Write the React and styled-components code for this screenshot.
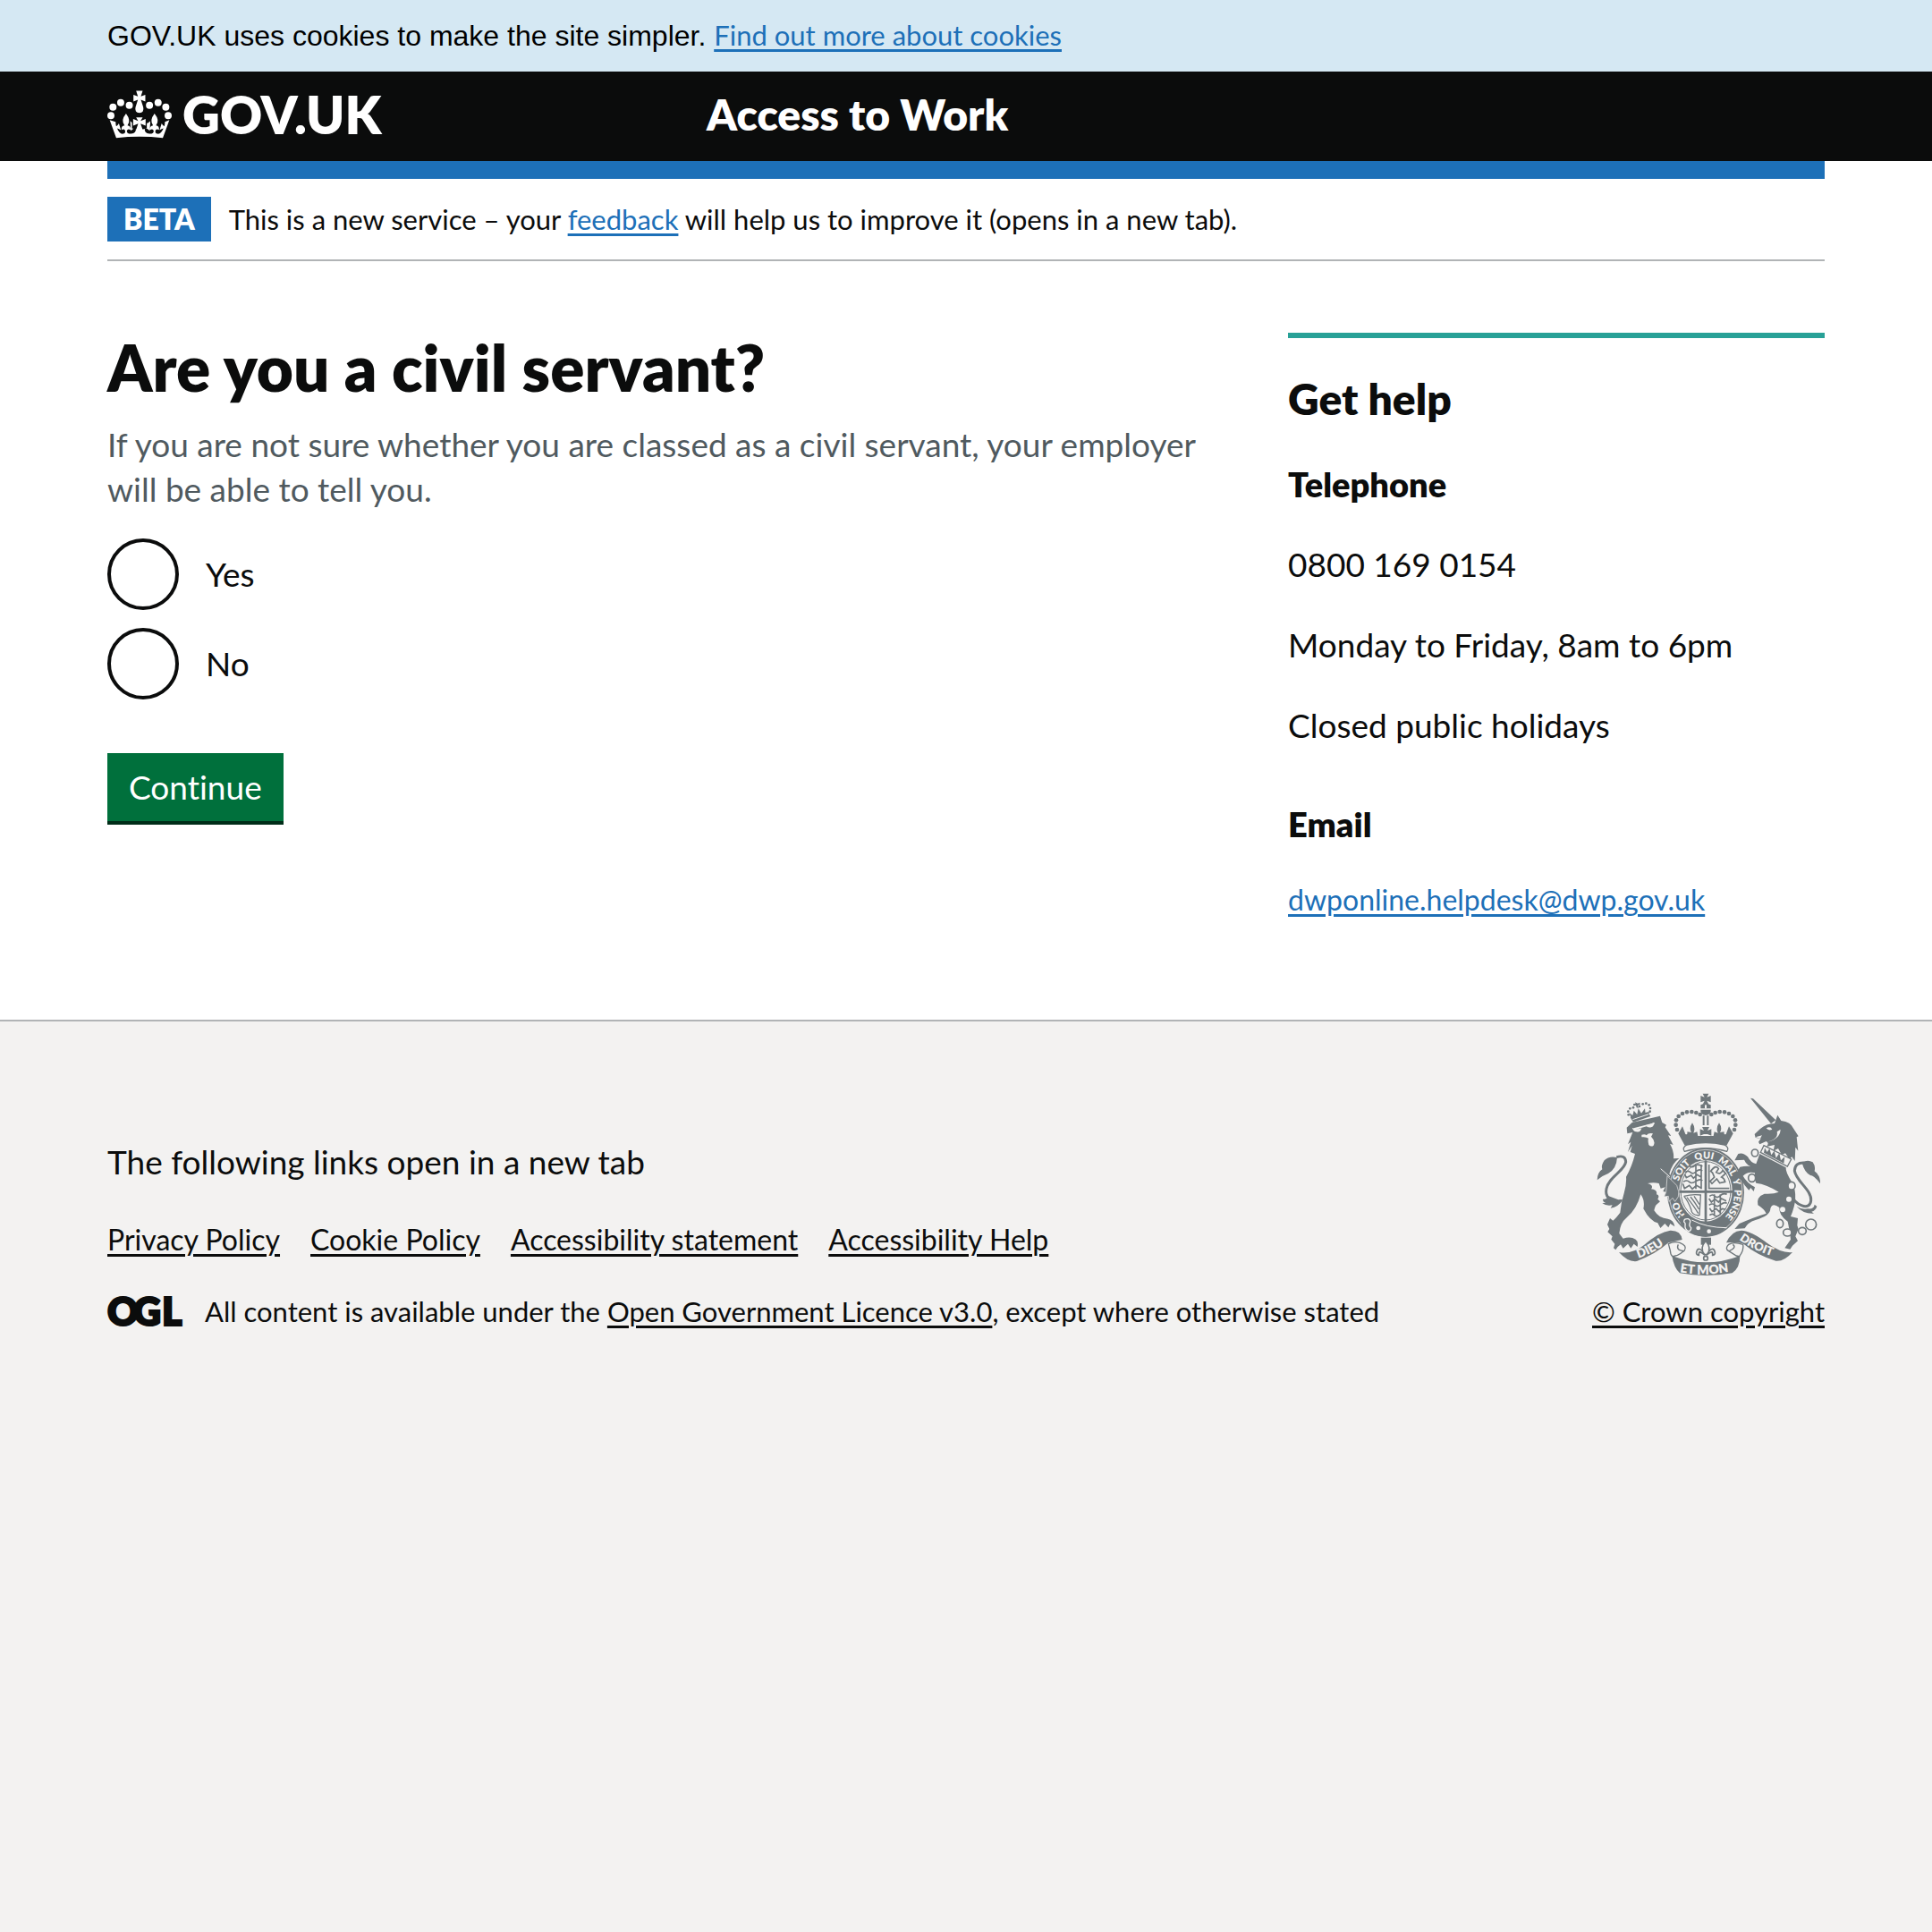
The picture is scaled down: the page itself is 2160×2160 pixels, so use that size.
import React from "react";
import styled, { createGlobalStyle } from "styled-components";

const colours = {
  ink: "#0b0c0c",
  blue: "#1d70b8",
  pale: "#d5e8f3",
  rule: "#b1b4b6",
  hint: "#505a5f",
  teal: "#28a197",
  green: "#00703c",
  greenShadow: "#002d18",
  canvas: "#f3f2f1",
  crest: "#6f777b",
};

const sans = `Lato, "Liberation Sans", Arial, sans-serif`;
const heavy = 800;

const GlobalStyle = createGlobalStyle`
  *, *::before, *::after { box-sizing: border-box; }
  body {
    margin: 0;
    background: ${colours.canvas};
    color: ${colours.ink};
    font-family: ${sans};
    font-size: 37px;
    line-height: 50px;
  }
`;

const Container = styled.div`
  width: calc(100% - 60px);
  max-width: 1920px;
  margin: 0 auto;
`;

const Link = styled.a`
  color: ${(p) => (p.$dark ? colours.ink : colours.blue)};
  font-size: ${(p) => (p.$large ? "32px" : "31px")};
  line-height: 40px;
  text-decoration-thickness: 3px;
  text-underline-offset: 4px;
`;

const CookieBar = styled.div`
  background: ${colours.pale};
  padding: 20px 0;
`;

const CookieText = styled.p`
  margin: 0;
  color: #000;
  font-family: "Liberation Sans", Arial, sans-serif;
  font-size: 32px;
  line-height: 40px;

  a {
    font-family: ${sans};
    line-height: 32px;
  }
`;

const Header = styled.header`
  background: ${colours.ink};
  color: #fff;
`;

const HeaderRow = styled(Container)`
  display: grid;
  grid-template-columns: 1fr 2fr;
  align-items: center;
  height: 100px;
  padding-bottom: 4px;
`;

const HomeLink = styled.a`
  display: flex;
  align-items: center;
  gap: 12px;
  color: inherit;
  font-size: 58px;
  font-weight: ${heavy};
  line-height: 60px;
  text-decoration: none;
`;

const ServiceLink = styled.a`
  padding-left: 30px;
  color: inherit;
  font-size: 48px;
  font-weight: ${heavy};
  line-height: 60px;
  text-decoration: none;
`;

const BlueRule = styled(Container)`
  height: 20px;
  background: ${colours.blue};
`;

const Page = styled.div`
  background: #fff;
`;

const PhaseBanner = styled(Container)`
  display: flex;
  align-items: center;
  gap: 20px;
  padding: 20px 0;
  border-bottom: 2px solid ${colours.rule};
`;

const Tag = styled.strong`
  padding: 0 18px;
  background: ${colours.blue};
  color: #fff;
  font-size: 32px;
  font-weight: ${heavy};
  line-height: 50px;
`;

const PhaseText = styled.p`
  margin: 0;
  font-size: 31px;
  line-height: 40px;
`;

const Main = styled(Container)`
  display: grid;
  grid-template-columns: minmax(0, 1fr) calc((100% + 60px) / 3 - 60px);
  column-gap: 60px;
  align-items: start;
  padding: 80px 0 114px;

  @media (max-width: 1280px) { grid-template-columns: 1fr; }
`;

const Form = styled.form`
  display: flex;
  flex-direction: column;
  align-items: flex-start;
  gap: 60px;
`;

const Fieldset = styled.fieldset`
  min-width: 0;
  margin: 0;
  padding: 0;
  border: 0;
`;

const Legend = styled.legend`
  padding: 0;
`;

const Title = styled.h1`
  margin: 0 0 22px;
  font-size: 71px;
  font-weight: ${heavy};
  line-height: 78px;
`;

const Hint = styled.p`
  margin: 0 0 30px;
  color: ${colours.hint};
`;

const Radios = styled.div`
  display: grid;
  gap: 20px;
`;

const RadioRow = styled.div`
  display: flex;
  align-items: center;
`;

const RadioInput = styled.input`
  appearance: none;
  width: 80px;
  height: 80px;
  margin: 0;
  border: 4px solid ${colours.ink};
  border-radius: 50%;
  background: transparent;
  cursor: pointer;

  &:checked { background: radial-gradient(circle, ${colours.ink} 0 20px, transparent 21px); }
  &:focus { outline: 6px solid #fd0; }
`;

const RadioLabel = styled.label`
  padding: 0 30px;
  cursor: pointer;
`;

const Submit = styled.button`
  padding: 13px 24px;
  border: 0;
  background: ${colours.green};
  box-shadow: 0 4px 0 ${colours.greenShadow};
  color: #fff;
  font: inherit;
  font-variant-ligatures: no-common-ligatures;
  cursor: pointer;
`;

const Help = styled.aside`
  display: flex;
  flex-direction: column;
  align-items: stretch;
  gap: 40px;
  padding-top: 38px;
  border-top: 6px solid ${colours.teal};
`;

const HelpTitle = styled.h2`
  margin: 0;
  font-size: 48px;
  font-weight: ${heavy};
  line-height: 60px;
`;

const HelpSubtitle = styled.h3`
  margin: 0;
  padding-top: ${(p) => (p.$spaced ? "20px" : "0")};
  font-size: 38px;
  font-weight: ${heavy};
  line-height: 50px;
`;

const HelpText = styled.p`
  margin: 0;
`;

const Footer = styled.footer`
  border-top: 2px solid ${colours.rule};
  padding: 80px 0;
`;

const FooterRow = styled(Container)`
  display: flex;
  align-items: flex-end;
  justify-content: space-between;
  gap: 60px;
`;

const FooterMeta = styled.div`
  display: grid;
  gap: 40px;
`;

const FooterTitle = styled.h2`
  margin: 0;
  font-size: 37px;
  font-weight: 400;
  line-height: 50px;
`;

const FooterLinks = styled.ul`
  display: flex;
  flex-wrap: wrap;
  column-gap: 34px;
  margin: 0;
  padding: 0;
  list-style: none;
  line-height: 40px;
`;

const Licence = styled.div`
  display: flex;
  align-items: center;
  gap: 27px;
  font-size: 31px;
  line-height: 40px;
`;

const Copyright = styled.div`
  display: flex;
  flex-direction: column;
  align-items: center;
  gap: 20px;
`;

const Drawing = styled.svg`
  display: block;
  flex: none;
  overflow: visible;
`;

const Crown = () => (
  <Drawing width="72" height="54" viewBox="30 32 217 162" fill="#fff" aria-hidden="true">
    {[[42, 117], [49, 88], [75, 73], [104, 82], [172, 82], [201, 73], [227, 88], [235, 117]].map(([x, y]) => (
      <circle key={x} cx={x} cy={y} r="12" />
    ))}
    <path d="M127 33h22l-6 19 15-5v22l-15-6 8 25q4 18-13 20-17-2-13-20l8-25-15 6V47l15 5z" />
    <path d="M38 132l22 60q78-9 157 0l22-60-15 6q0 10-2 15-6-4-9-10l-7 23q7-5 13-6-8 20-20 18-9-2-7-11 3-8 12-2 2-13-10-15 14-17-5-40-18 23-5 40-12 2-10 15 9-6 12 2 2 11-14 11-18-1-16-19 9 0 17 9l2-33q-7 9-21 9 1-8 9-20h-44q8 12 9 20-14 0-21-9l2 33q8-9 17-9 2 18-16 19-16 0-14-11 3-8 12-2 2-13-10-15 13-17-5-40-19 23-5 40-12 2-10 15 9-6 12 2 2 9-7 11-12 2-20-18 6 1 13 6l-7-23q-3 6-9 10-2-5-2-15z" />
    <path fill={colours.ink} d="M113 118h50v42q-25 8-50 0z" />
    <path d="M127 123h22l-7 12 17-7v23l-17-7 7 20h-22l7-20-17 7v-23l17 7z" />
  </Drawing>
);

const LicenceLogo = () => (
  <Drawing width="82" height="40" viewBox="0 0 82 40" role="img" aria-label="Open Government Licence">
    <text x="0 29 61" y="36" fill={colours.ink} stroke={colours.ink} strokeWidth="2" fontFamily="Lato, sans-serif" fontWeight="800" fontSize="43">OGL</text>
  </Drawing>
);

const leftBeads = [
  [341, 187], [337, 171], [338, 155], [346, 142], [359, 133], [374, 128], [390, 127], [405, 130], [418, 136],
];

const lionBeads = [
  [178, 137], [177, 126], [183, 116], [194, 113], [215, 109], [226, 101], [237, 99], [247, 104], [251, 115], [250, 126],
];

const garterWords = [["HO", 80], ["SOIT", 199], ["QUI", 291], ["MAL", 367], ["Y", 448], ["PENSE", 482]];

const Crest = () => (
  <Drawing width="252" height="204" viewBox="68 64 756 612" fill={colours.crest} aria-hidden="true">
    <defs>
      <path id="garter" d="M437 508A96 112 0 1 1 438 508" />
      <path id="scrollLeft" d="M211 618Q270 600 326 549" />
      <path id="scrollRight" d="M549 556Q600 595 690 621" />
      <path id="scrollBase" d="M350 665Q437 680 530 661" />
    </defs>

    {/* Lion's crown */}
    <path d="M184 146l58-18 10 14-58 20z" />
    <path d="M186 146l-6-16 12 9 4-16 11 13 4-20 10 16 12-16 2 16 13-6-2 15z" />
    {lionBeads.map(([x, y]) => (
      <circle key={`${x}-${y}`} cx={x} cy={y} r="4" />
    ))}
    <path d="M200 95l9 4 7-3 1 8-8 1 3 9-7-1-2-8-8 2-1-7 8-1z" />
    <path d="M192 153l54-18" stroke={colours.canvas} strokeWidth="3" />

    {/* Lion */}
    <path d="M172 180L190 163 284 141 291 163 305 171 301 179 321 208 311 206 328 238 317 234Q332 262 329 284L348 283Q324 300 315 335L338 366Q347 392 344 408L333 425 326 414 314 426 312 408 298 410 304 396 294 394 301 380 286 384 280 367Q262 362 242 367 264 374 254 386 276 388 272 404 284 406 276 420L284 428 272 438Q268 440 264 458 280 485 310 486 330 490 333 512L318 502 312 515 300 502 285 517 276 500Q250 494 228 452 234 425 219 404 205 455 172 482 150 500 147 535L160 552Q185 543 202 555 212 562 208 580L196 570 186 585 176 570 160 585 152 572Q142 578 135 590L128 584 132 570 120 555 124 545 108 530 114 520 107 505 116 484 126 492Q136 484 150 465 153 430 163 400 172 370 170 345 190 310 200 268L184 262 190 240 176 262 186 228 176 236 192 196 174 200z" />
    <g fill={colours.canvas}>
      <path d="M190 180q14 8 32 2-4 16-18 12-10-2-14-14zM236 172q16-2 28-10 0 14-10 17-12 3-18-7z" />
      <path d="M222 204q12-4 16 2 8-10 22-6l-6 10q16 16 8 30-8 6-16-2-4-14-1-22-8-6-23-4z" />
      <path d="M195 182l70-18v4l-68 20z" />
    </g>
    <path d="M286 318l52 46" stroke={colours.canvas} strokeWidth="3" />
    <path d="M147 430Q96 424 104 385C112 345 165 325 169 295Q168 270 138 279" fill="none" stroke={colours.crest} strokeWidth="9" />
    <path d="M140 280Q112 274 97 290 85 308 90 320 74 330 73 356 92 340 110 334 138 318 140 280zM92 420Q104 422 112 410L144 422Q160 420 158 424 144 446 118 450L124 440Q104 444 90 434L102 432Q92 430 92 420z" />

    {/* Imperial crown */}
    {leftBeads.map(([x, y]) => (
      <React.Fragment key={`${x}-${y}`}>
        <circle cx={x} cy={y} r="7" />
        <circle cx={874 - x} cy={y} r="7" />
      </React.Fragment>
    ))}
    <path d="M427 66h20l-6 12 13-5v22l-13-5 6 12h-20l6-12-13 5V73l13 5z" />
    <path d="M420 104q17-8 34 0v12h-34zM420 120h34q2 16-17 19-19-3-17-19z" />
    <path d="M434 104h6v12h-6z" fill={colours.canvas} />
    <path d="M427 140h6v32h-6zM441 140h6v32h-6zM425 178h24l-6 12 13-5v22l-13-5h-12l-13 5v-22l13 5z" />
    <path d="M392 164q-12 18-3 32l-14-2q2 12-6 8l-10-26-14 24 22 40h140l22-40-14-24-10 26q-8 4-6-8l-14 2q9-14-3-32-12 18-4 34l-12-4-3 14h-52l-3-14-12 4q8-16-4-34z" />
    <path d="M374 238q63-14 126 0 18 10 8 22-70-22-142 0-10-12 8-22z" fill={colours.canvas} stroke={colours.crest} strokeWidth="4" />

    {/* Garter and shield */}
    <ellipse cx="437" cy="397" rx="129" ry="149" />
    <ellipse cx="437" cy="397" rx="123" ry="143" fill="none" stroke={colours.canvas} strokeWidth="2" />
    <ellipse cx="437" cy="392" rx="89" ry="103" fill={colours.canvas} />
    <g fill={colours.canvas} fontFamily="Lato, sans-serif" fontWeight="800" fontSize="32">
      {garterWords.map(([word, offset]) => (
        <text key={word}><textPath href="#garter" startOffset={offset}>{word}</textPath></text>
      ))}
    </g>
    <g fill="none" stroke={colours.crest}>
      <path d="M437 290v208M348 395h180" strokeWidth="8" />
      <ellipse cx="437" cy="392" rx="84" ry="98" strokeWidth="3" />
      <path d="M368 330q10-8 18 0t18-2 22-4M366 336l6 12 16-8 8 10 12-12 14 8M382 308q8 8 18 0t26 2M362 362q12-8 20 0t22-2 22-2M360 368l6 16 16-10 10 12 14-12 18 10M404 306v80M422 304v82" strokeWidth="5" />
      <path d="M448 304v80h68M454 326q18-24 26-8l-8 12q14 10 22-6l10 10-14 12q10 4 12 16l-18 4-10-14-16 16-6-8 14-14-6-14z" strokeWidth="5" />
      <path d="M364 410q30-8 56-4l-4 68q-26 2-28-20-10-28-24-44M374 414q24 30 38 54M386 412q20 26 28 42M398 410l18 28" strokeWidth="4" />
      <path d="M450 410q10-8 18 0t18-2 22-4M448 418l8 12 12-10 12 10 10-12 16 8M448 440q12-8 20 0t20-2 20-4M450 450l8 12 14-10 10 10 10-10 12 2M450 474q10-8 16 0t22-4M466 404v72M486 404v66" strokeWidth="5" />
    </g>
    <path d="M350 470q40 50 132 48l22 0q-26 24-67 28-52-2-84-44z" />
    <path d="M378 486q-14-2-14 10 6 4 4 12-2 14 12 20 8-2 8-12-8-6-4-16 4-10-6-14z" stroke={colours.canvas} strokeWidth="4" />
    <path d="M390 490q50 26 118 26" stroke={colours.canvas} strokeWidth="3" fill="none" />
    <circle cx="412" cy="517" r="7" fill={colours.canvas} />
    <circle cx="448" cy="528" r="7" fill={colours.canvas} />

    {/* Lion's forepaw over the garter */}
    <path d="M308 342L340 374Q350 396 345 412L334 428 326 416 314 428 312 410 298 412 304 396z" stroke={colours.canvas} strokeWidth="2" />

    {/* Unicorn */}
    <path d="M587 81l9 2 76 72-16 12z" />
    <path d="M668 166L678 138 690 157Q722 160 732 184L748 209 742 212 747 258 738 246 736 292 726 278 718 286 704 266 692 272 680 250 664 258 668 238 640 244Q652 232 640 226L618 236 614 228 622 216 604 214 601 202 620 184Q640 166 668 166z" />
    <path d="M640 182q14-8 20 4-12 6-20-4zM688 186q-2 34-46 42 40-8 34-34zM604 212l22-6-6 10z" fill={colours.canvas} />
    <path d="M632 240l92 46-13 24-90-47z" fill={colours.canvas} stroke={colours.crest} strokeWidth="4" />
    <path d="M632 264l3-16 8 14 8-12 6 22 10-14 6 24 11-16 5 24 13-12-3 22z" />
    <path d="M618 268L706 314Q704 330 728 366 750 412 722 478L746 484 744 508 748 520 738 545 746 560 728 576 720 588 702 584 722 555Q718 520 712 495 682 474 684 448 660 430 654 452 654 476 604 490 578 498 568 518L534 520 550 502Q600 480 640 468 632 452 612 440 606 412 634 402 664 404 682 396 640 370 606 366 598 348 602 332 578 326 562 342 574 364 602 380L598 394 588 382 582 390 568 374Q556 350 534 342L552 312Q582 306 604 314 576 312 566 288L534 290 546 268Q562 262 578 278 588 298 606 302z" />
    <path d="M722 402C736 440 786 462 790 425 794 390 740 360 735 325Q736 296 768 298" fill="none" stroke={colours.crest} strokeWidth="9" />
    <path d="M760 298Q778 286 796 296 806 310 802 326 822 340 821 368 800 340 788 340 768 330 760 298zM742 444Q760 456 780 452 800 454 802 438L810 444Q806 458 792 462L800 468Q764 470 742 444z" />
    <g fill={colours.canvas}>
      <circle cx="716" cy="420" r="9" />
      <circle cx="695" cy="455" r="9" />
    </g>
    <g fill={colours.canvas} stroke={colours.crest} strokeWidth="5">
      <ellipse cx="602" cy="265" rx="11" ry="12" />
      <ellipse cx="592" cy="349" rx="12" ry="13" />
      <ellipse cx="725" cy="375" rx="12" ry="13" />
      <ellipse cx="686" cy="502" rx="11" ry="14" />
      <ellipse cx="711" cy="532" rx="14" ry="12" />
      <ellipse cx="761" cy="527" rx="13" ry="12" />
      <circle cx="790" cy="505" r="18" />
    </g>

    {/* Motto scroll */}
    <path d="M146 598Q190 606 230 574 280 530 318 525 354 524 358 556L312 566Q270 604 206 628 176 632 146 598z" />
    <path d="M728 598Q690 602 644 568 590 526 556 525 524 526 506 566 550 562 566 572 612 610 672 627 700 630 728 598z" />
    <g fill={colours.canvas} stroke={colours.crest} strokeWidth="4">
      <path d="M312 570Q330 560 350 566 376 576 366 592 352 604 342 608L326 612Q318 606 318 592z" />
      <path d="M562 572Q530 562 514 572 500 586 514 594L540 610 550 612Q566 590 562 572z" />
      <path d="M345 572q-10 20 20 22M528 572q14 10-12 22" fill="none" />
    </g>
    <path d="M324 610Q437 654 552 610 552 650 526 668 437 684 350 668 330 650 324 610z" />
    <g fill={colours.canvas} fontFamily="Lato, sans-serif" fontWeight="800">
      <text fontSize="41"><textPath href="#scrollLeft">DIEU</textPath></text>
      <text fontSize="39"><textPath href="#scrollRight">DROIT</textPath></text>
      <text fontSize="42"><textPath href="#scrollBase">ET MON</textPath></text>
    </g>

    {/* Fleur-de-lis */}
    <path d="M421 549h34v24h-34z" />
    <g fill={colours.canvas} stroke={colours.crest} strokeWidth="5">
      <path d="M434 604q-22-30-28-6-2 8 8 10-2-20 18-2zM440 604q22-30 28-6 2 8-8 10 2-20-18-2z" />
      <path d="M437 560q-22 26-4 46h8q18-20-4-46z" />
      <circle cx="437" cy="618" r="7" />
    </g>
  </Drawing>
);

const answers = ["Yes", "No"];
const footerLinks = ["Privacy Policy", "Cookie Policy", "Accessibility statement", "Accessibility Help"];

export default function App() {
  return (
    <>
      <GlobalStyle />
      <CookieBar>
        <Container>
          <CookieText>
            GOV.UK uses cookies to make the site simpler. <Link href="#cookies">Find out more about cookies</Link>
          </CookieText>
        </Container>
      </CookieBar>
      <Header>
        <HeaderRow>
          <HomeLink href="#home"><Crown />GOV.UK</HomeLink>
          <ServiceLink href="#service">Access to Work</ServiceLink>
        </HeaderRow>
      </Header>
      <Page>
        <BlueRule />
        <PhaseBanner>
          <Tag>BETA</Tag>
          <PhaseText>
            This is a new service – your <Link href="#feedback">feedback</Link> will help us to improve it (opens in a new tab).
          </PhaseText>
        </PhaseBanner>
        <Main as="main">
          <Form onSubmit={(e) => e.preventDefault()}>
            <Fieldset aria-describedby="civil-servant-hint">
              <Legend><Title>Are you a civil servant?</Title></Legend>
              <Hint id="civil-servant-hint">
                If you are not sure whether you are classed as a civil servant, your employer will be able to tell you.
              </Hint>
              <Radios>
                {answers.map((answer) => (
                  <RadioRow key={answer}>
                    <RadioInput type="radio" name="civil-servant" id={`answer-${answer}`} value={answer} />
                    <RadioLabel htmlFor={`answer-${answer}`}>{answer}</RadioLabel>
                  </RadioRow>
                ))}
              </Radios>
            </Fieldset>
            <Submit type="submit">Continue</Submit>
          </Form>
          <Help>
            <HelpTitle>Get help</HelpTitle>
            <HelpSubtitle>Telephone</HelpSubtitle>
            <HelpText>0800 169 0154</HelpText>
            <HelpText>Monday to Friday, 8am to 6pm</HelpText>
            <HelpText>Closed public holidays</HelpText>
            <HelpSubtitle $spaced>Email</HelpSubtitle>
            <Link $large href="mailto:dwponline.helpdesk@dwp.gov.uk">dwponline.helpdesk@dwp.gov.uk</Link>
          </Help>
        </Main>
      </Page>
      <Footer>
        <FooterRow>
          <FooterMeta>
            <FooterTitle>The following links open in a new tab</FooterTitle>
            <FooterLinks>
              {footerLinks.map((label) => (
                <li key={label}><Link $dark $large href="#policy">{label}</Link></li>
              ))}
            </FooterLinks>
            <Licence>
              <LicenceLogo />
              <span>
                All content is available under the <Link $dark href="#licence">Open Government Licence v3.0</Link>, except where otherwise stated
              </span>
            </Licence>
          </FooterMeta>
          <Copyright>
            <Crest />
            <Link $dark href="#copyright">© Crown copyright</Link>
          </Copyright>
        </FooterRow>
      </Footer>
    </>
  );
}
